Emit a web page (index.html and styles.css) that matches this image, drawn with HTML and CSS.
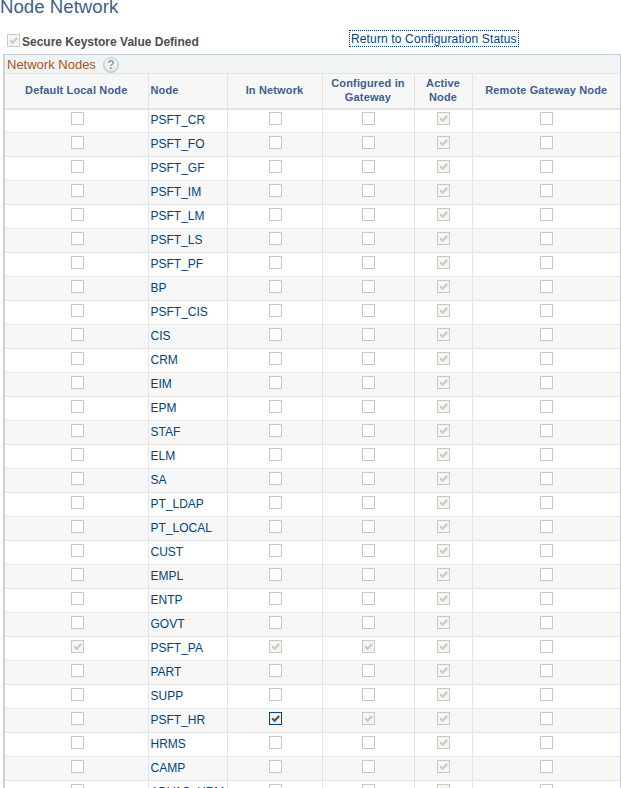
FILE: index.html
```html
<!DOCTYPE html>
<html lang="en">
<head>
  <meta charset="UTF-8">
  <title>Node Network</title>
  <link rel="stylesheet" href="styles.css">
</head>
<body>
  <h1>Node Network</h1>
  <div class="top-row">
    <label class="keystore"><span class="cb on"></span>Secure Keystore Value Defined</label>
    <a class="status-link" href="#">Return to Configuration Status</a>
  </div>
  <div class="grid-box">
    <div class="grid-title">Network Nodes
      <svg class="help" width="16" height="16" viewBox="0 0 16 16">
        <defs>
          <radialGradient id="helpFill" cx="50%" cy="45%" r="55%">
            <stop offset="0" stop-color="#fdfdfe"/>
            <stop offset="0.7" stop-color="#e9edf2"/>
            <stop offset="1" stop-color="#c3ced9"/>
          </radialGradient>
        </defs>
        <circle cx="8" cy="8" r="7.5" fill="url(#helpFill)" stroke="#c0cad4"/>
        <text x="8" y="12" text-anchor="middle" class="help-q">?</text>
      </svg>
    </div>
    <table>
      <thead>
        <tr>
          <th class="c1">Default Local Node</th>
          <th class="c2 left">Node</th>
          <th class="c3">In Network</th>
          <th class="c4">Configured in Gateway</th>
          <th class="c5">Active Node</th>
          <th class="c6">Remote Gateway Node</th>
        </tr>
      </thead>
      <tbody id="rows"></tbody>
    </table>
  </div>
  <script>
    const check = '<svg viewBox="0 0 11 11" width="11" height="11"><path d="M2.2 5.4 L4.6 7.8 L9.2 3"/></svg>';
    const nodes = ['PSFT_CR','PSFT_FO','PSFT_GF','PSFT_IM','PSFT_LM','PSFT_LS','PSFT_PF','BP','PSFT_CIS','CIS','CRM','EIM','EPM','STAF','ELM','SA','PT_LDAP','PT_LOCAL','CUST','EMPL','ENTP','GOVT','PSFT_PA','PART','SUPP','PSFT_HR','HRMS','CAMP','ADVAS_HRM'];
    const box = cls => `<span class="cb ${cls}">${cls ? check : ''}</span>`;
    document.querySelectorAll('.keystore .cb').forEach(el => { el.innerHTML = check; });
    document.getElementById('rows').innerHTML = nodes.map(name => {
      const pa = name === 'PSFT_PA', hr = name === 'PSFT_HR';
      return `<tr>
        <td>${box(pa ? 'on' : '')}</td>
        <td class="left"><a href="#">${name}</a></td>
        <td>${box(pa ? 'on' : hr ? 'live' : '')}</td>
        <td>${box(pa || hr ? 'on' : '')}</td>
        <td>${box('on')}</td>
        <td>${box('')}</td>
      </tr>`;
    }).join('');
  </script>
</body>
</html>
```

FILE: styles.css
```css
html, body { height: 788px; overflow: hidden; }
body { margin: 0; background: #fff; font-family: "Liberation Sans", Arial, sans-serif; font-size: 12px; }

h1 { margin: 0; height: 30px; font-size: 18.67px; font-weight: normal; line-height: 14px; color: #3e5f8a; }

.top-row { display: flex; height: 24px; align-items: flex-start; }
.keystore { display: flex; align-items: flex-start; gap: 2px; width: 349px; padding: 4px 0 0 7px; box-sizing: border-box; font-weight: bold; line-height: 16px; color: #4d4d4d; }
.status-link { color: #00447c; text-decoration: none; border: 1px dotted #00447c; padding: 1px 1px 0; line-height: 14px; letter-spacing: 0.14px; }

.grid-box { width: 618px; margin-left: 3px; border-left: 2px solid #cbd2da; border-top: 1px solid #c5ccd5; border-right: 1px solid #c5ccd5; box-sizing: border-box; }
.grid-title { height: 18px; background: #f1f4f5; color: #a9541a; font-size: 13px; line-height: 19px; padding: 1px 0 0 2px; box-sizing: border-box; display: flex; align-items: center; gap: 7px; }
.help-q { font-size: 12px; font-weight: bold; fill: #8c99a8; font-family: "Liberation Sans", Arial, sans-serif; }

table { border-collapse: collapse; table-layout: fixed; width: 100%; }
th, td { box-sizing: border-box; }
th { height: 35px; padding: 0 0 2px; background: #f7f7f7; color: #3e5f8a; font-size: 11px; line-height: 14px; letter-spacing: 0.15px; border: 1px solid #e4e4e4; border-bottom: 2px solid #e4e4e4; border-left: 0; }
td { height: 24px; padding: 0 0 2px; text-align: center; border: 0 solid #e4e4e4; border-width: 0 1px 1px 0; }
tbody tr:nth-child(even) td { background: #f7f7f7; }
th:last-child, td:last-child { border-right: 0; }
.left { text-align: left; padding-left: 2px; }
td a { color: #00447c; text-decoration: none; }
td .cb { margin-bottom: 2px; }
td:first-child .cb { margin-left: 2px; }
td:nth-child(3) .cb, td:nth-child(5) .cb { margin-left: 1px; }

.c1 { width: 143px; }
.c2 { width: 79px; }
.c3 { width: 95px; }
.c4 { width: 92px; }
.c5 { width: 58px; }

.cb { display: inline-flex; align-items: center; justify-content: center; width: 13px; height: 13px; box-sizing: border-box; border: 1px solid #c9c9bf; background: #fff; vertical-align: middle; }
.cb svg { fill: none; stroke: #c8c8c0; stroke-width: 2; flex: none; }
.cb.on { background: #f6f6f4; }
.cb.live { border-color: #00447c; background: #f0f0f0; }
.cb.live svg { stroke: #4d4d4d; }
```
